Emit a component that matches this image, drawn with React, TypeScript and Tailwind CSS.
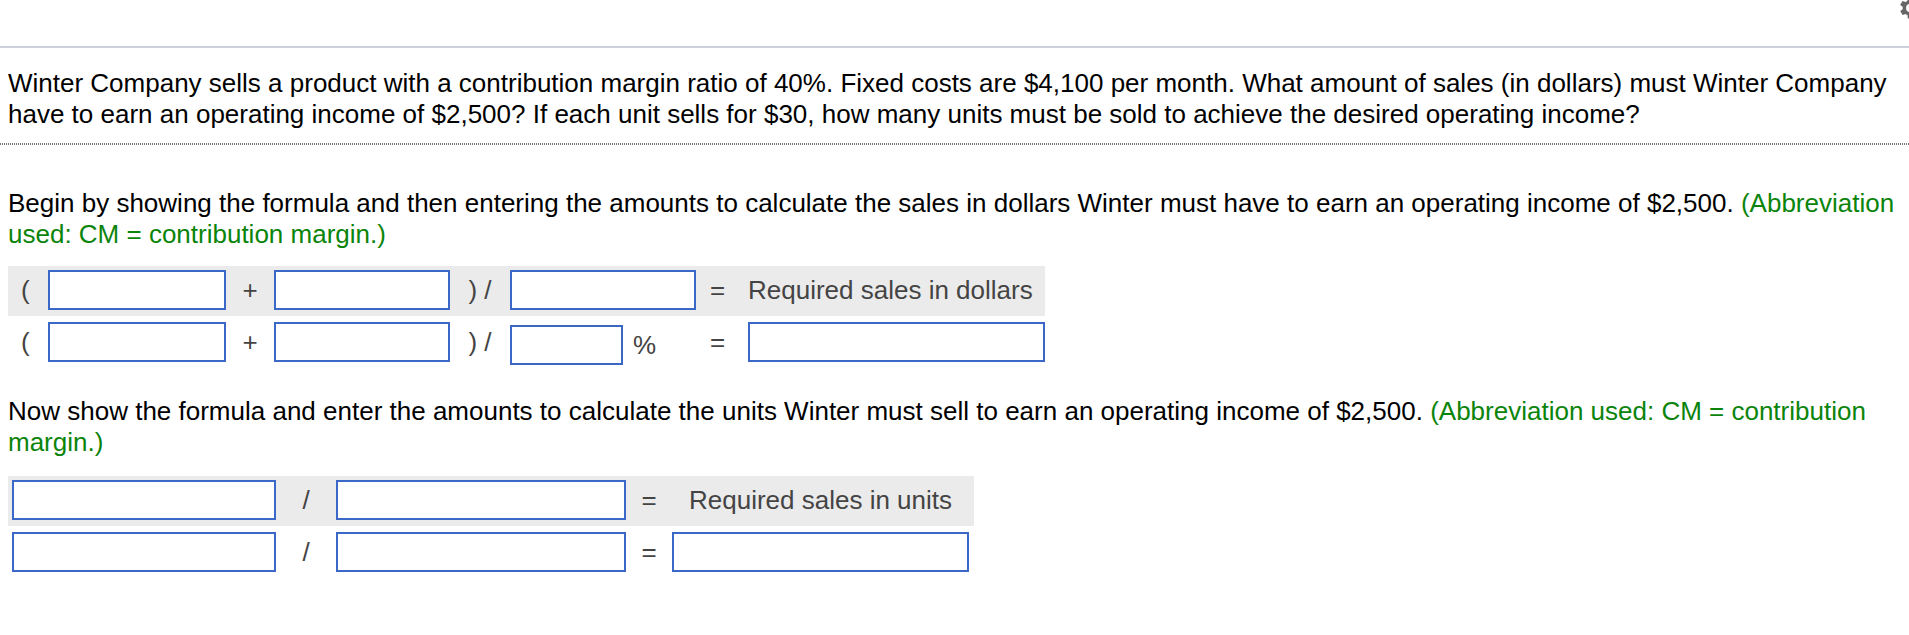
import React from 'react'

function Box({ className = '' }: { className?: string }) {
    return <div className={`h-[40px] border-2 border-[#3b67c7] bg-white ${className}`} />
}

function Op({ children, className = '' }: { children: React.ReactNode; className?: string }) {
    return <div className={`flex h-[40px] items-center text-[#444] ${className}`}>{children}</div>
}

export default function App() {
    return (
        <div className="relative min-h-[635px] w-full overflow-hidden bg-white font-['Liberation_Sans',Arial,sans-serif] text-[26px] leading-[31px] text-black">
            {/* settings cog, cut off at the window edge */}
            <svg className="absolute right-[-14px] top-[-6px] h-[28px] w-[28px] text-[#666]" viewBox="0 0 24 24" fill="currentColor">
                <path d="M19.4 13a7.5 7.5 0 0 0 0-2l2.1-1.6-2-3.5-2.5 1a7.4 7.4 0 0 0-1.7-1L15 3h-4l-.4 2.9a7.4 7.4 0 0 0-1.7 1l-2.5-1-2 3.5L6.6 11a7.5 7.5 0 0 0 0 2l-2.1 1.6 2 3.5 2.5-1a7.4 7.4 0 0 0 1.7 1L11 21h4l.4-2.9a7.4 7.4 0 0 0 1.7-1l2.5 1 2-3.5L19.4 13zM13 15.5a3.5 3.5 0 1 1 0-7 3.5 3.5 0 0 1 0 7z" />
            </svg>

            <div className="h-[46px]" />
            <div className="h-[2px] bg-[#cdd0dc]" />

            <p className="mt-[20px] whitespace-nowrap pl-[8px]">
                Winter Company sells a product with a contribution margin ratio of 40%. Fixed costs are $4,100 per month. What amount of sales (in dollars) must Winter Company
                <br />
                have to earn an operating income of $2,500? If each unit sells for $30, how many units must be sold to achieve the desired operating income?
            </p>

            <div className="mt-[13px] h-[2px] bg-[repeating-linear-gradient(90deg,#777_0_1px,transparent_1px_2px)]" />

            <p className="mt-[43px] whitespace-nowrap pl-[8px]">
                Begin by showing the formula and then entering the amounts to calculate the sales in dollars Winter must have to earn an operating income of $2,500.{' '}
                <span className="text-[#0b840b]">(Abbreviation</span>
                <br />
                <span className="text-[#0b840b]">used: CM = contribution margin.)</span>
            </p>

            {/* sales in dollars */}
            <div className="ml-[8px] mt-[16px] flex w-fit flex-col gap-[2px]">
                <div className="grid h-[50px] grid-cols-[40px_178px_48px_176px_60px_186px_52px_297px] bg-[#ebebeb] pt-[4px]">
                    <Op className="pl-[13px]">(</Op>
                    <Box />
                    <Op className="justify-center">+</Op>
                    <Box />
                    <Op className="justify-center">)&nbsp;/</Op>
                    <Box />
                    <Op className="pl-[14px]">=</Op>
                    <Op>Required sales in dollars</Op>
                </div>
                <div className="grid h-[50px] grid-cols-[40px_178px_48px_176px_60px_186px_52px_297px] pt-[4px]">
                    <Op className="pl-[13px]">(</Op>
                    <Box />
                    <Op className="justify-center">+</Op>
                    <Box />
                    <Op className="justify-center">)&nbsp;/</Op>
                    <div className="flex items-center">
                        <Box className="w-[113px]" />
                        <span className="ml-[10px] text-[#444]">%</span>
                    </div>
                    <Op className="pl-[14px]">=</Op>
                    <Box />
                </div>
            </div>

            <p className="mt-[28px] whitespace-nowrap pl-[8px]">
                Now show the formula and enter the amounts to calculate the units Winter must sell to earn an operating income of $2,500.{' '}
                <span className="text-[#0b840b]">(Abbreviation used: CM = contribution</span>
                <br />
                <span className="text-[#0b840b]">margin.)</span>
            </p>

            {/* sales in units */}
            <div className="ml-[8px] mt-[18px] flex w-fit flex-col gap-[2px]">
                <div className="grid h-[50px] grid-cols-[264px_60px_290px_46px_297px] bg-[#ebebeb] pl-[4px] pr-[5px] pt-[4px]">
                    <Box />
                    <Op className="justify-center">/</Op>
                    <Box />
                    <Op className="justify-center">=</Op>
                    <Op className="pl-[17px]">Required sales in units</Op>
                </div>
                <div className="grid h-[50px] grid-cols-[264px_60px_290px_46px_297px] pl-[4px] pr-[5px] pt-[4px]">
                    <Box />
                    <Op className="justify-center">/</Op>
                    <Box />
                    <Op className="justify-center">=</Op>
                    <Box />
                </div>
            </div>
        </div>
    )
}
